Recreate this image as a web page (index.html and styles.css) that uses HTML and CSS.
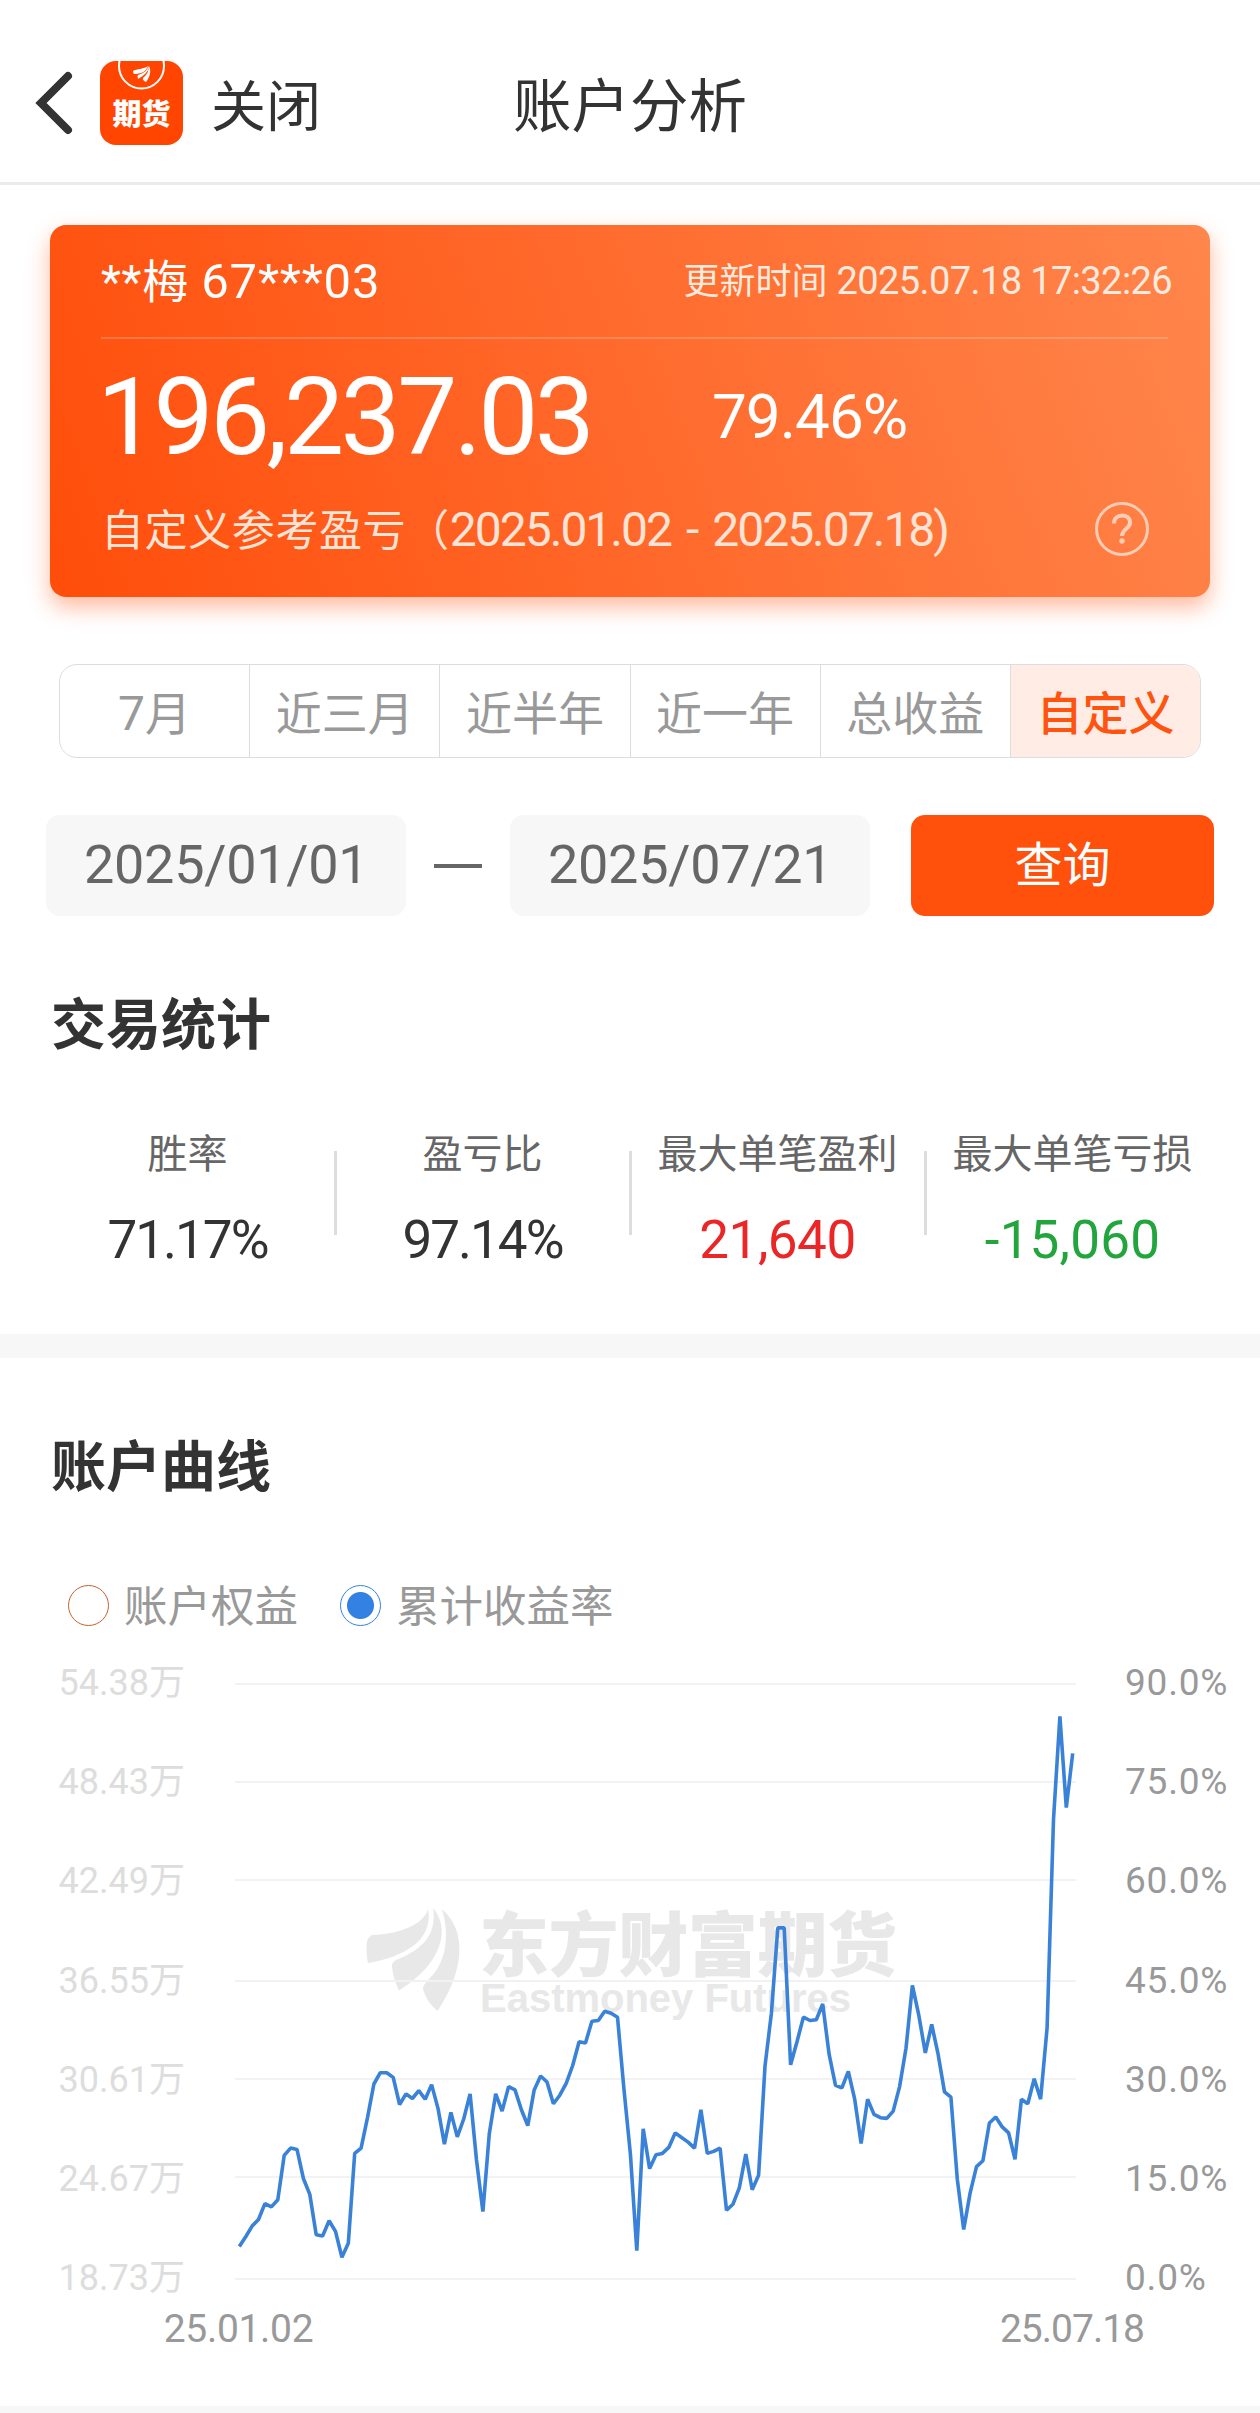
FILE: index.html
```html
<!DOCTYPE html>
<html lang="zh-CN">
<head>
    <meta charset="UTF-8">
    <meta name="viewport" content="width=device-width, initial-scale=1.0">
    <title>账户分析</title>
    <link rel="stylesheet" href="styles.css">
</head>
<body>
    <header class="header">
        <div class="header-left">
            <svg class="back" width="44" height="72" viewBox="0 0 44 72">
                <path d="M37 9 L10 36 L37 63" fill="none" stroke="#333" stroke-width="8" stroke-linecap="round"/>
            </svg>
            <div class="logo">
                <svg class="logo-mark" width="84" height="30" viewBox="0 0 84 30">
                    <circle cx="41.5" cy="5" r="22.5" fill="none" stroke="#fff" stroke-width="2"/>
                    <path d="M48 5 C45 8 36 8 33 10 Q33 12 34 13 C41 13 46 11 48 5Z M48.5 5 C50 10 43 15 38 18 Q37 15 38 14 C44 12 47 10 48.5 5Z M49 5 C52 11 49 17 46 21 Q42 19 43 17 C47 14 49 10 49 5Z" fill="#fff"/>
                </svg>
                <span class="logo-text">期货</span>
            </div>
            <span class="close">关闭</span>
        </div>
        <h1 class="title">账户分析</h1>
    </header>

    <section class="card">
        <div class="card-top">
            <div class="account">**梅 <span class="num">67***03</span></div>
            <div class="update">更新时间 <span class="num">2025.07.18 17:32:26</span></div>
        </div>
        <div class="card-main">
            <div class="profit">196,237.03</div>
            <div class="rate">79.46%</div>
        </div>
        <div class="card-bottom">
            <div class="range"><span>自定义参考盈亏</span><span class="paren">（</span><span class="num">2025.01.02<span class="to">-</span>2025.07.18)</span></div>
            <svg class="help" width="56" height="56" viewBox="0 0 56 56" fill="none" stroke="#ffcdb5" stroke-width="3">
                <circle cx="28" cy="28" r="25.5"/>
                <path d="M20 22.5 C20 12 36 12 36 21.5 C36 28 28 27.5 28 35" stroke-width="4"/>
                <circle cx="28" cy="40" r="2.7" fill="#ffcdb5" stroke="none"/>
            </svg>
        </div>
    </section>

    <nav class="tabs">
        <div class="tab"><span class="num">7</span>月</div>
        <div class="tab">近三月</div>
        <div class="tab">近半年</div>
        <div class="tab">近一年</div>
        <div class="tab">总收益</div>
        <div class="tab active">自定义</div>
    </nav>

    <div class="query">
        <div class="date">2025/01/01</div>
        <div class="dash"></div>
        <div class="date">2025/07/21</div>
        <button class="btn">查询</button>
    </div>

    <section class="stats">
        <h2>交易统计</h2>
        <div class="stats-row">
            <div class="stat">
                <div class="label">胜率</div>
                <div class="value tight">71.17%</div>
            </div>
            <div class="stat">
                <div class="label">盈亏比</div>
                <div class="value tight">97.14%</div>
            </div>
            <div class="stat">
                <div class="label">最大单笔盈利</div>
                <div class="value red">21,640</div>
            </div>
            <div class="stat">
                <div class="label">最大单笔亏损</div>
                <div class="value green">-15,060</div>
            </div>
        </div>
    </section>

    <section class="curve">
        <h2>账户曲线</h2>
        <div class="legend">
            <div class="legend-item"><i class="radio"></i><span>账户权益</span></div>
            <div class="legend-item"><i class="radio checked"></i><span>累计收益率</span></div>
        </div>
        <svg class="chart" width="1260" height="746" viewBox="0 0 1260 746">
            <g class="watermark">
                <path d="M428 249 C424 264 401 274 372 275 Q366 278 366.5 288 Q366.5 297 368 303 C404 297 434 280 428 249Z"/>
                <path d="M433 248 C450 268 444 302 399 330.6 Q393 318 392 307 Q391 303 396 300 C416 292 438 279 433 248Z"/>
                <path d="M442 249 C466 270 466 308 437.5 351 Q426 341 423 329 Q423 325 429 319 C444 305 451 280 442 249Z"/>
                <text class="wm-cn" x="479" y="311" textLength="418">东方财富期货</text>
                <text class="wm-en" x="480" y="351.5" textLength="371">Eastmoney Futures</text>
            </g>
            <g id="grid"></g>
            <polyline id="line" class="line" points=""/>
            <text class="axis-x" x="238.5" y="682">25.01.02</text>
            <text class="axis-x last" x="1072" y="682">25.07.18</text>
        </svg>
    </section>
    <div class="footer-gap"></div>

    <script src="chart.js"></script>
</body>
</html>
```
FILE: styles.css
```css
* {
    box-sizing: border-box;
}

body {
    margin: 0;
    background: #fff;
    color: #333;
    font-family: Roboto, "Noto Sans CJK SC", sans-serif;
}

h1, h2 {
    margin: 0;
}

/* 顶部导航 */
.header {
    display: grid;
    grid-template-columns: 1fr auto 1fr;
    height: 185px;
    padding-top: 24px;
    align-items: center;
    border-bottom: 3px solid #ebebeb;
}

.header-left {
    display: flex;
    align-items: center;
    padding-left: 31px;
}

.logo {
    display: flex;
    flex-direction: column;
    align-items: center;
    width: 83px;
    height: 84px;
    margin: 0 28px 0 25px;
    border-radius: 16px;
    background: #ff4500;
    overflow: hidden;
}

.logo-mark {
    flex: none;
}

.logo-text {
    color: #fff;
    font-size: 29px;
    font-weight: 900;
    line-height: 48px;
}

.close {
    padding-top: 8px;
    font-size: 55px;
    line-height: 80px;
    white-space: nowrap;
}

.title {
    padding-top: 8px;
    font-size: 58.5px;
    font-weight: 400;
    line-height: 80px;
}

/* 账户卡片 */
.card {
    width: 1160px;
    height: 372px;
    margin: 40px 0 0 50px;
    padding: 0 42px 0 51px;
    border-radius: 16px;
    background: linear-gradient(70deg, #ff4d0a 0%, #ff6a2c 50%, #ff864c 100%);
    box-shadow: 0 10px 22px rgba(255, 80, 12, 0.4);
    color: #fff;
}

.card-top {
    display: flex;
    justify-content: space-between;
    align-items: center;
    height: 112px;
    margin-right: -4px;
    padding-bottom: 6px;
}

.account {
    font-size: 46px;
    letter-spacing: 0.8px;
}

.account .num {
    font-size: 49px;
}

.update {
    font-size: 36px;
    color: #ffeadf;
}

.update .num {
    font-size: 38px;
    letter-spacing: -0.6px;
}

.card-main {
    display: flex;
    align-items: center;
    height: 152px;
    border-top: 2px solid rgba(255, 255, 255, 0.2);
}

.profit {
    width: 615px;
    margin-left: -4px;
    padding-top: 7px;
    font-size: 107px;
    letter-spacing: -3.6px;
}

.rate {
    padding-top: 4px;
    font-size: 62px;
    letter-spacing: -1px;
}

.card-bottom {
    display: flex;
    justify-content: space-between;
    align-items: center;
    height: 80px;
    padding-right: 18px;
    color: #ffe3d5;
}

.range {
    padding-bottom: 4px;
    font-size: 43px;
    letter-spacing: 0.6px;
}

.range .num {
    font-size: 48px;
    letter-spacing: -2px;
}

.range .to {
    margin: 0 15px;
}

.help {
    flex: none;
}

/* 区间切换 */
.tabs {
    display: flex;
    width: 1142px;
    height: 94px;
    margin: 68px 0 0 59px;
    margin-top: 67px;
    border: 1px solid #ddd;
    border-radius: 18px;
    overflow: hidden;
}

.tab {
    flex: 1;
    border-left: 1px solid #ddd;
    color: #999;
    font-size: 46px;
    line-height: 98px;
    text-align: center;
}

.tab:first-child {
    border-left: none;
}

.tab .num {
    font-size: 48px;
}

.tab.active {
    background: #ffece5;
    color: #ff5310;
    font-weight: 500;
}

/* 日期查询 */
.query {
    display: flex;
    align-items: center;
    margin: 57px 46px 0;
    height: 101px;
}

.date {
    width: 360px;
    height: 101px;
    padding-left: 38px;
    border-radius: 14px;
    background: #f7f7f7;
    color: #666;
    font-size: 54px;
    letter-spacing: -0.3px;
    line-height: 99px;
}

.dash {
    width: 48px;
    height: 4px;
    margin: 0 28px;
    background: #666;
}

.btn {
    width: 303px;
    height: 101px;
    margin-left: auto;
    padding: 0;
    border: none;
    border-radius: 14px;
    background: #ff500c;
    color: #fff;
    font-family: inherit;
    font-size: 48px;
    line-height: 98px;
}

/* 交易统计 */
.stats {
    height: 418px;
}

h2 {
    padding-left: 51px;
    font-size: 55px;
    font-weight: 700;
    line-height: 80px;
}

.stats h2 {
    padding-top: 69px;
}

.stats-row {
    display: flex;
    margin: 62px 40px 0;
}

.stat {
    position: relative;
    flex: 1;
    text-align: center;
}

.stat + .stat::before {
    content: "";
    position: absolute;
    left: -1px;
    top: 24px;
    width: 3px;
    height: 84px;
    background: #ddd;
}

.label {
    color: #666;
    font-size: 40px;
    line-height: 56px;
    white-space: nowrap;
}

.value {
    margin-top: 22px;
    font-size: 53px;
    line-height: 70px;
    letter-spacing: -0.5px;
}

.tight {
    letter-spacing: -2px;
}

.red {
    color: #eb2626;
}

.green {
    color: #22a53c;
    letter-spacing: 0.2px;
}

/* 账户曲线 */
.curve {
    height: 1072px;
    border-top: 24px solid #f7f7f7;
}

.curve h2 {
    padding-top: 69px;
}

.legend {
    display: flex;
    gap: 42px;
    margin: 67px 0 0 68px;
    height: 62px;
}

.legend-item {
    display: flex;
    align-items: center;
    color: #999;
    font-size: 43.5px;
    line-height: 62px;
}

.legend-item span {
    padding-top: 5px;
}

.radio {
    width: 41px;
    height: 41px;
    margin-right: 15px;
    border: 1px solid #c8602c;
    border-radius: 50%;
}

.radio.checked {
    border-color: #3381e3;
    background: radial-gradient(circle, #3381e3 13px, #fff 14px);
}

.chart {
    display: block;
    margin-top: 24px;
}

.watermark {
    fill: #e8e8e8;
}

.wm-cn {
    font-size: 70px;
    font-weight: 900;
}

.wm-en {
    font-family: "Liberation Sans", Arial, sans-serif;
    font-size: 40px;
    font-weight: 700;
}

.grid-line {
    stroke: #f2f2f2;
    stroke-width: 2;
}

.line {
    fill: none;
    stroke: #3a82d8;
    stroke-width: 3.6;
    stroke-linejoin: bevel;
}

.axis-left {
    fill: #ddd;
    font-size: 36px;
    text-anchor: end;
}

.axis-right {
    fill: #999;
    font-size: 37px;
    letter-spacing: 0.8px;
}

.axis-x {
    fill: #999;
    font-size: 39px;
    letter-spacing: -0.3px;
    text-anchor: middle;
}

.axis-x.last {
    letter-spacing: -1px;
}

.footer-gap {
    height: 7px;
    background: #f7f7f7;
}
```
FILE: chart.js
```js
// 每个交易日的累计收益率(%)
var rates = [
    4.9, 6.4, 8.0, 9.0, 11.4, 10.9, 12.0, 18.7, 19.8, 19.6, 15.2, 12.8, 6.7, 6.5, 8.8, 7.2, 3.3, 5.4, 19.0, 19.8,
    24.4, 29.5, 31.2, 31.2, 30.5, 26.4, 28.0, 27.3, 28.5, 27.2, 29.4, 25.8, 20.4, 25.2, 21.5, 24.2, 28.0, 18.0, 10.2, 22.0,
    28.0, 25.4, 29.1, 28.6, 25.6, 23.2, 28.6, 30.7, 29.8, 26.5, 27.8, 29.6, 32.3, 35.9, 35.7, 39.0, 39.1, 40.5, 40.2, 39.6,
    28.8, 18.9, 4.3, 22.7, 16.7, 18.8, 19.0, 19.9, 22.1, 21.4, 20.7, 19.8, 25.6, 19.0, 19.3, 19.8, 10.4, 11.3, 13.8, 18.9,
    13.5, 15.7, 32.2, 40.2, 53.1, 53.1, 32.4, 35.9, 39.6, 39.1, 39.2, 41.6, 34.0, 29.3, 28.9, 31.4, 27.2, 20.5, 27.2, 24.9,
    24.4, 24.3, 25.4, 29.1, 34.9, 44.4, 39.9, 34.2, 38.5, 34.0, 28.3, 27.5, 15.1, 7.5, 13.0, 17.0, 17.9, 23.6, 24.5, 23.0,
    22.1, 18.1, 27.2, 26.5, 30.3, 27.2, 38.0, 69.5, 85.1, 71.3, 79.5
];
var equity = ['54.38万', '48.43万', '42.49万', '36.55万', '30.61万', '24.67万', '18.73万'];
var gridY = [24, 122, 220, 321, 419, 517, 619];

var left = 239.3, right = 1072.7, top0 = 24, bottom = 619;
var step = (bottom - top0) / 6;

// 网格线和两侧刻度
var html = '';
for (var i = 0; i < equity.length; i++) {
    var textY = Math.round(top0 + step * i) + 11;
    html += '<line class="grid-line" x1="235" x2="1076" y1="' + gridY[i] + '" y2="' + gridY[i] + '"/>';
    html += '<text class="axis-left" x="185" y="' + textY + '">' + equity[i] + '</text>';
    html += '<text class="axis-right" x="1125" y="' + textY + '">' + (90 - i * 15).toFixed(1) + '%</text>';
}
document.getElementById('grid').innerHTML = html;

// 收益率曲线
var points = rates.map(function (v, i) {
    var x = left + (right - left) * i / (rates.length - 1);
    var y = bottom - (bottom - top0) * v / 90;
    return x.toFixed(1) + ',' + y.toFixed(1);
});
document.getElementById('line').setAttribute('points', points.join(' '));
```
